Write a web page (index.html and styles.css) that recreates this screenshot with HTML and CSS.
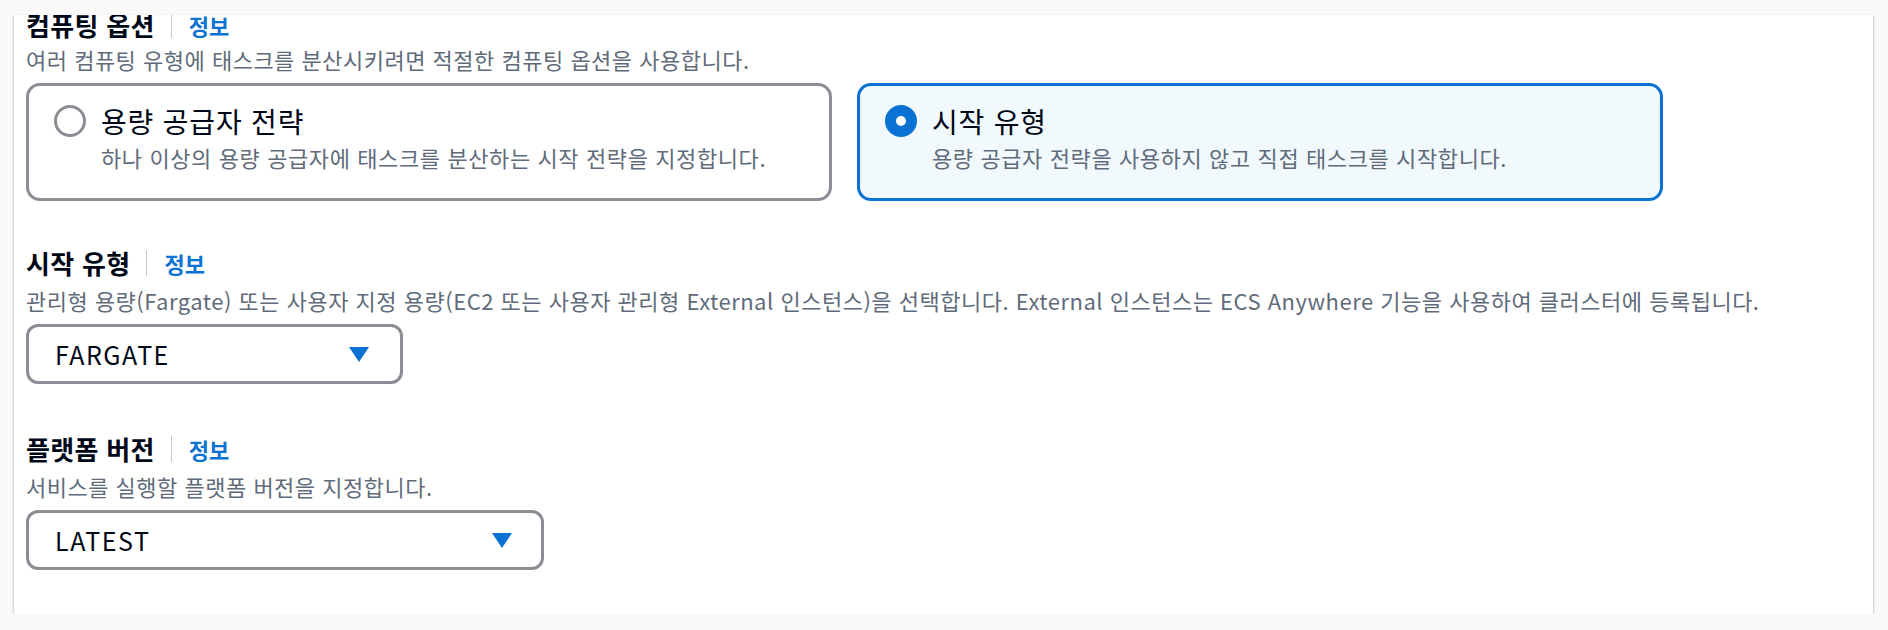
FILE: index.html
```html
<!DOCTYPE html>
<html lang="ko">
  <head>
    <meta charset="UTF-8" />
    <meta name="viewport" content="width=device-width, initial-scale=1" />
    <title>서비스 환경</title>
    <link rel="stylesheet" href="styles.css">
  </head>
  <body>
    <div class="card">
      <section class="field field-compute">
        <div class="label-row">
          <span class="label">컴퓨팅 옵션</span>
          <span class="sep"></span>
          <a class="info" href="#">정보</a>
        </div>
        <p class="desc">여러 컴퓨팅 유형에 태스크를 분산시키려면 적절한 컴퓨팅 옵션을 사용합니다.</p>
        <div class="tiles">
          <label class="tile">
            <span class="radio"></span>
            <span class="tile-text">
              <span class="tile-title">용량 공급자 전략</span>
              <span class="tile-desc">하나 이상의 용량 공급자에 태스크를 분산하는 시작 전략을 지정합니다.</span>
            </span>
          </label>
          <label class="tile selected">
            <span class="radio"></span>
            <span class="tile-text">
              <span class="tile-title">시작 유형</span>
              <span class="tile-desc">용량 공급자 전략을 사용하지 않고 직접 태스크를 시작합니다.</span>
            </span>
          </label>
        </div>
      </section>

      <section class="field">
        <div class="label-row">
          <span class="label">시작 유형</span>
          <span class="sep"></span>
          <a class="info" href="#">정보</a>
        </div>
        <p class="desc">관리형 용량(Fargate) 또는 사용자 지정 용량(EC2 또는 사용자 관리형 External 인스턴스)을 선택합니다. External 인스턴스는 ECS Anywhere 기능을 사용하여 클러스터에 등록됩니다.</p>
        <div class="select select-launch">
          <span>FARGATE</span>
          <span class="caret"></span>
        </div>
      </section>

      <section class="field">
        <div class="label-row">
          <span class="label">플랫폼 버전</span>
          <span class="sep"></span>
          <a class="info" href="#">정보</a>
        </div>
        <p class="desc">서비스를 실행할 플랫폼 버전을 지정합니다.</p>
        <div class="select select-version">
          <span>LATEST</span>
          <span class="caret"></span>
        </div>
      </section>
    </div>
  </body>
</html>
```

FILE: styles.css
```css
body {
  margin: 0;
  background: #fafafa;
  font-family: "Noto Sans CJK KR", "Noto Sans", sans-serif;
  color: #000716;
}
.card {
  margin: 15px 15px 0 14px;
  padding: 0 12px 45px;
  height: 599px;
  box-sizing: border-box;
  background: #fff;
  overflow: hidden;
  box-shadow: 0 1px 2px rgba(0, 28, 36, 0.25), 1px 1px 2px rgba(0, 28, 36, 0.1),
    -1px 1px 2px rgba(0, 28, 36, 0.1);
}
.field + .field {
  margin-top: 47px;
}
.field:last-child {
  margin-top: 50px;
}
.field-compute {
  margin-top: -5px;
}
.field-compute .desc {
  margin-top: 4px;
}
.label-row {
  display: flex;
  align-items: center;
  height: 30px;
}
.label {
  font-size: 26px;
  font-weight: 700;
  letter-spacing: 0.3px;
  line-height: 30px;
}
.sep {
  width: 1px;
  height: 26px;
  background: #c6c6cd;
  margin: 0 17px 0 16px;
}
.info {
  color: #0972d3;
  font-size: 22px;
  font-weight: 700;
  text-decoration: none;
  line-height: 30px;
}
.desc {
  margin: 7px 0 0;
  font-size: 22px;
  letter-spacing: 0.5px;
  line-height: 30px;
  color: #5f6b7a;
}
.tiles {
  display: grid;
  grid-template-columns: 806px 806px;
  gap: 25px;
  margin-top: 9px;
}
.tile {
  display: flex;
  align-items: flex-start;
  gap: 15px;
  height: 118px;
  box-sizing: border-box;
  padding: 19px 24px 0 25px;
  border: 3px solid #8c8c94;
  border-radius: 14px;
  background: #fff;
}
.tile.selected {
  border-color: #0972d3;
  background: #f1f9fd;
}
.radio {
  flex: none;
  width: 32px;
  height: 32px;
  box-sizing: border-box;
  border: 3px solid #8c8c94;
  border-radius: 50%;
  background: #fff;
}
.tile.selected .radio {
  border: 11px solid #0972d3;
}
.tile-text {
  display: flex;
  flex-direction: column;
  gap: 5px;
}
.tile-title {
  font-size: 28px;
  letter-spacing: 0.8px;
  line-height: 32px;
}
.tile-desc {
  font-size: 22px;
  letter-spacing: 0.6px;
  line-height: 30px;
  color: #5f6b7a;
}
.select {
  display: flex;
  align-items: center;
  justify-content: space-between;
  height: 60px;
  box-sizing: border-box;
  margin-top: 9px;
  padding: 0 31px 0 26px;
  border: 3px solid #8c8c94;
  border-radius: 12px;
  font-size: 25px;
  letter-spacing: 1.5px;
}
.select-launch {
  width: 377px;
}
.select-version {
  width: 518px;
  padding-right: 29px;
}
.caret {
  width: 0;
  height: 0;
  border-left: 10px solid transparent;
  border-right: 10px solid transparent;
  border-top: 15px solid #0972d3;
}
```
